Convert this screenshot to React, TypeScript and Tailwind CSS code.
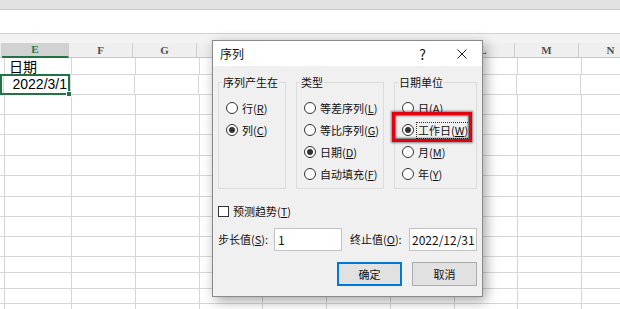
import React from 'react';

const COLS = [
  { w: 2, l: '' },
  { w: 67, l: 'E' },
  { w: 64, l: 'F' },
  { w: 64, l: 'G' },
  { w: 63, l: '' },
  { w: 64, l: '' },
  { w: 64, l: '' },
  { w: 64, l: '' },
  { w: 63, l: 'L' },
  { w: 64, l: 'M' },
  { w: 64, l: 'N' },
];

const ROWS = [17, 20, 20, 20, 21, 20, 21, 20, 20, 20, 16, 16, 15, 16];

const cjk = "font-['Noto_Sans_CJK_SC',sans-serif]";

const Radio = ({ on = false }: { on?: boolean }) => (
  <span className="flex h-3 w-3 shrink-0 items-center justify-center rounded-full border border-[#333] bg-white">
    {on && <span className="h-[6px] w-[6px] rounded-full bg-[#333]" />}
  </span>
);

interface OptionProps {
  text: string;
  k: string;
  on?: boolean;
  focus?: boolean;
}

const Option = ({ text, k, on, focus }: OptionProps) => (
  <div className="flex h-[22px] items-center gap-1 whitespace-nowrap">
    <Radio on={on} />
    <span className={focus ? 'ml-[-2px] border border-dotted border-[#333] px-[1px] leading-[15px]' : 'leading-[15px]'}>
      {text}(<u>{k}</u>)
    </span>
  </div>
);

const Group = ({ title, width, children }: { title: string; width: number; children: React.ReactNode }) => (
  <fieldset className="h-[115px] border border-[#dcdcdc]" style={{ width }}>
    <legend className="ml-[3px] whitespace-nowrap px-[1px] leading-[17px]">{title}</legend>
    <div className="flex flex-col pl-[7px] pt-[6px]">{children}</div>
  </fieldset>
);

const Sheet = () => (
  <div className="flex flex-col">
    {/* ribbon bottom + formula bar */}
    <div className="h-[10px] border-b border-[#c9c9c9] bg-[#e2e2e2]" />
    <div className="h-[24px] border-b border-[#d0d0d0] bg-white" />
    <div className="h-[9px] bg-[#f3f3f3]" />

    {/* column headers */}
    <div className="flex h-[15px]">
      {COLS.map((c, i) => (
        <div
          key={i}
          style={{ width: c.w }}
          className={`flex shrink-0 items-center justify-center border-r border-[#cfcfcf] font-['Liberation_Serif',serif] text-[11px] font-bold ${
            c.l === 'E'
              ? 'border-b-2 border-b-[#217346] bg-[#d2d2d2] text-[#217346]'
              : 'border-b border-b-[#c6c6c6] bg-[#efefef] text-[#505050]'
          }`}
        >
          {c.l}
        </div>
      ))}
    </div>

    {/* grid */}
    {ROWS.map((h, r) => (
      <div key={r} className="flex" style={{ height: h }}>
        {COLS.map((c, i) => (
          <div
            key={i}
            style={{ width: c.w }}
            className={`flex shrink-0 items-center whitespace-nowrap border-b border-r border-[#d6d6d6] text-[14px] leading-[15px] text-black ${
              r === 1 ? "justify-end pr-[3px] font-['Liberation_Sans',sans-serif]" : `pl-1 ${cjk}`
            }`}
          >
            {i === 1 && r === 0 && '日期'}
            {i === 1 && r === 1 && '2022/3/1'}
          </div>
        ))}
      </div>
    ))}
  </div>
);

const Dialog = () => (
  <div className={`absolute left-[212px] top-[40px] flex h-[257px] w-[271px] flex-col border border-[#8a8a8a] shadow-[3px_4px_12px_rgba(0,0,0,0.35)] ${cjk} text-[11px] text-[#111]`}>
    {/* title bar */}
    <div className="flex h-[25px] items-center bg-white pl-[7px]">
      <span className="text-[12px]">序列</span>
      <span className="ml-auto mr-[31px] text-[14px] leading-none">?</span>
      <svg width="10" height="10" viewBox="0 0 10 10" className="mr-[15px]">
        <path d="M0.5 0.5L9.5 9.5M9.5 0.5L0.5 9.5" stroke="#222" strokeWidth="1" />
      </svg>
    </div>

    {/* body */}
    <div className="flex flex-1 flex-col bg-[#f0f0f0] px-[5px]">
      <div className="mt-[8px] flex gap-[10px]">
        <Group title="序列产生在" width={68}>
          <Option text="行" k="R" />
          <Option text="列" k="C" on />
        </Group>
        <Group title="类型" width={88}>
          <Option text="等差序列" k="L" />
          <Option text="等比序列" k="G" />
          <Option text="日期" k="D" on />
          <Option text="自动填充" k="F" />
        </Group>
        <Group title="日期单位" width={83}>
          <Option text="日" k="A" />
          <Option text="工作日" k="W" on focus />
          <Option text="月" k="M" />
          <Option text="年" k="Y" />
        </Group>
      </div>

      <div className="mt-[14px] flex h-[16px] items-center gap-1">
        <span className="h-[11px] w-[11px] border border-[#333] bg-white" />
        <span>
          预测趋势(<u>T</u>)
        </span>
      </div>

      <div className="mt-[9px] flex h-[23px] items-center whitespace-nowrap">
        <span className="w-[56px]">
          步长值(<u>S</u>):
        </span>
        <div className="flex h-[23px] w-[68px] items-center border border-[#c2c2c2] bg-white pl-[3px] text-[12px]">1</div>
        <span className="ml-[8px] w-[59px]">
          终止值(<u>O</u>):
        </span>
        <div className="flex h-[23px] w-[68px] items-center border border-[#c2c2c2] bg-white pl-[2px] text-[12px]">
          2022/12/31
        </div>
      </div>

      <div className="mt-[11px] flex justify-end gap-[10px]">
        <button className="h-[24px] w-[65px] border-2 border-[#0078d7] bg-[#e1e1e1]">确定</button>
        <button className="h-[24px] w-[65px] border border-[#adadad] bg-[#e1e1e1]">取消</button>
      </div>
    </div>
  </div>
);

export default function App() {
  return (
    <div className="relative h-[309px] w-[620px] overflow-hidden bg-white">
      <Sheet />

      {/* selected cell E2 */}
      <div className="absolute left-0 top-[74px] h-[21px] w-[70px] border-2 border-[#217346]">
        <span className="absolute bottom-[-4px] right-[-4px] h-[6px] w-[6px] border border-white bg-[#217346]" />
      </div>

      <Dialog />

      {/* red highlight annotation */}
      <div className="absolute left-[392px] top-[112px] h-[30px] w-[80px] border-[3px] border-[#e3000f] shadow-[0_0_2px_1px_rgba(0,0,0,0.45),inset_0_0_2px_1px_rgba(0,0,0,0.6)]" />
    </div>
  );
}
